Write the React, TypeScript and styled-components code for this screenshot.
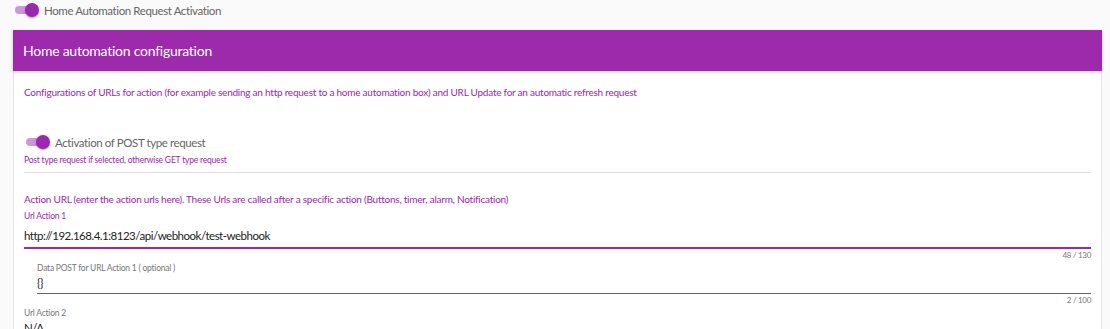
import React from "react";
import styled, { createGlobalStyle } from "styled-components";

const Global = createGlobalStyle`
  html, body { margin: 0; padding: 0; background: #fafafa; }
  body { font-family: Lato, "Open Sans", sans-serif; }
`;

const PURPLE = "#9c27b0";

const Page = styled.div`
  width: 1110px;
  height: 329px;
  overflow: hidden;
  padding: 0 8px 0 13px;
  box-sizing: border-box;
`;

const ToggleRow = styled.div`
  display: flex;
  align-items: center;
  gap: 5px;
  height: 20px;
`;

const Track = styled.span`
  position: relative;
  display: inline-block;
  width: 22px;
  height: 8px;
  border-radius: 4px;
  background: #cf95da;
  margin-left: 2px;
  margin-right: 2px;
`;

const Knob = styled.span`
  position: absolute;
  right: -2px;
  top: -3px;
  width: 14px;
  height: 14px;
  border-radius: 50%;
  background: ${PURPLE};
  box-shadow: 0 1px 2px rgba(0, 0, 0, 0.35);
`;

const ToggleLabel = styled.span`
  font-size: 11.5px;
  letter-spacing: -0.4px;
  color: #666;
`;

const Card = styled.div`
  margin-top: 10px;
  width: 1089px;
  background: #fff;
  border-left: 1px solid #e6e6e6;
  border-right: 1px solid #e6e6e6;
  box-sizing: border-box;
`;

const Header = styled.div`
  height: 41px;
  background: #9c2aab;
  display: flex;
  align-items: center;
  padding-left: 10px;
  color: #fff;
  font-size: 14px;
  letter-spacing: -0.25px;
  box-shadow: 0 1px 3px rgba(0, 0, 0, 0.25);
  margin: 0 -1px;
`;

const Body = styled.div`
  padding: 14px 10px 0 10px;
  display: flex;
  flex-direction: column;
`;

const Info = styled.div`
  font-size: 10px;
  letter-spacing: -0.24px;
  color: ${PURPLE};
  line-height: 14px;
`;

const Hint = styled.div`
  font-size: 8.5px;
  letter-spacing: -0.2px;
  color: ${PURPLE};
  line-height: 12px;
  margin-top: 2px;
`;

const Divider = styled.div`
  height: 1px;
  background: #e0e0e0;
  margin: 6px 0 19px 0;
`;

const Field = styled.div<{ $indent?: number; $mt?: number }>`
  margin-left: ${(p) => p.$indent ?? 0}px;
  margin-top: ${(p) => p.$mt ?? 0}px;
  display: flex;
  flex-direction: column;
`;

const FieldLabel = styled.div<{ $active?: boolean }>`
  font-size: 8.5px;
  letter-spacing: -0.22px;
  line-height: 12px;
  color: ${(p) => (p.$active ? PURPLE : "#777")};
`;

const FieldValue = styled.div<{ $active?: boolean; $gap?: number }>`
  font-size: 11.5px;
  letter-spacing: -0.5px;
  line-height: 18px;
  color: #222;
  margin-top: ${(p) => p.$gap ?? 0}px;
  padding-bottom: ${(p) => (p.$active ? 2 : 1)}px;
  border-bottom: ${(p) => (p.$active ? `2px solid ${PURPLE}` : "1px solid #666")};
`;

const Counter = styled.div`
  font-size: 8px;
  letter-spacing: -0.3px;
  line-height: 10px;
  color: #777;
  text-align: right;
  margin-top: 1px;
`;

export default function App() {
  return (
    <>
      <Global />
      <Page>
        <ToggleRow>
          <Track>
            <Knob />
          </Track>
          <ToggleLabel>Home Automation Request Activation</ToggleLabel>
        </ToggleRow>
        <Card>
          <Header>Home automation configuration</Header>
          <Body>
            <Info>
              Configurations of URLs for action (for example sending an http request to a home automation box) and URL Update for an automatic refresh request
            </Info>
            <Field $mt={33}>
              <ToggleRow>
                <Track>
                  <Knob />
                </Track>
                <ToggleLabel>Activation of POST type request</ToggleLabel>
              </ToggleRow>
              <Hint>Post type request if selected, otherwise GET type request</Hint>
            </Field>
            <Divider />
            <Info>Action URL (enter the action urls here). These Urls are called after a specific action (Buttons, timer, alarm, Notification)</Info>
            <Field $mt={4}>
              <FieldLabel $active>Url Action 1</FieldLabel>
              <FieldValue $active $gap={5}>http://192.168.4.1:8123/api/webhook/test-webhook</FieldValue>
              <Counter>48 / 130</Counter>
            </Field>
            <Field $indent={13} $mt={2}>
              <FieldLabel>Data POST for URL Action 1 ( optional )</FieldLabel>
              <FieldValue>{"{}"}</FieldValue>
              <Counter>2 / 100</Counter>
            </Field>
            <Field $mt={2}>
              <FieldLabel>Url Action 2</FieldLabel>
              <FieldValue>N/A</FieldValue>
            </Field>
          </Body>
        </Card>
      </Page>
    </>
  );
}
